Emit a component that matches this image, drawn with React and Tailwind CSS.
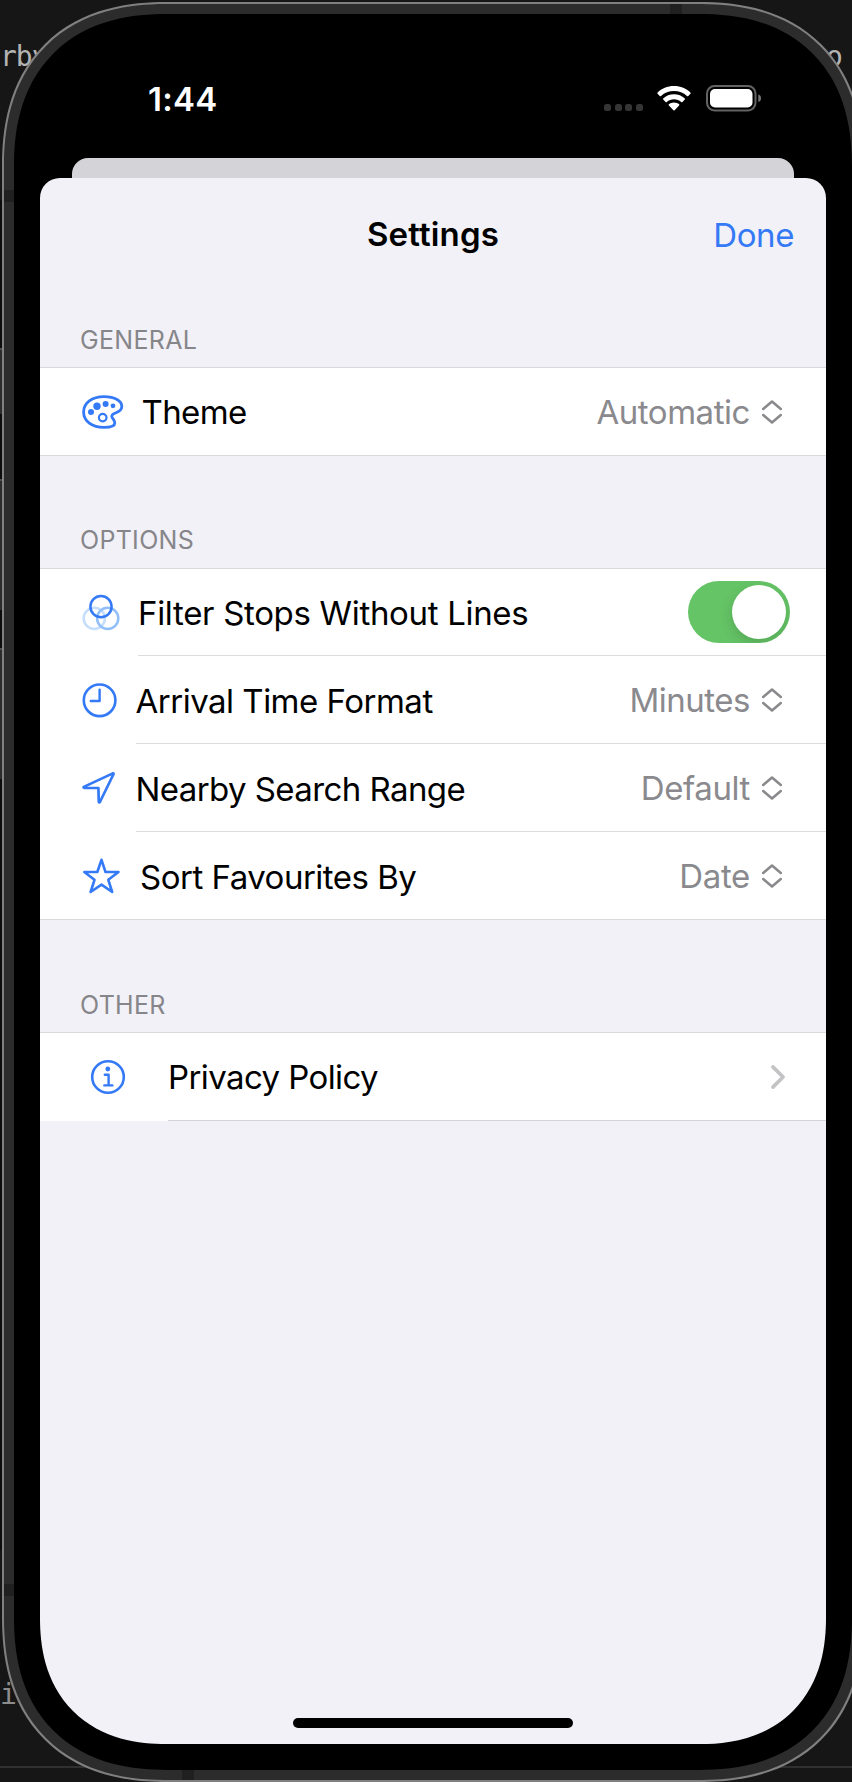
import React from "react";

const Svg = ({ w, h, className = "", children }) => (
  <svg
    width={w}
    height={h}
    viewBox={`0 0 ${w} ${h}`}
    fill="none"
    strokeLinecap="round"
    strokeLinejoin="round"
    className={`block shrink-0 overflow-visible ${className}`}
  >
    {children}
  </svg>
);

const BLUE = "#3479f6";

const PaletteIcon = () => (
  <Svg w={41} h={34}>
    <path
      d="M22 1.7C33 1.7 39.8 6 39.8 11.5C39.8 14.5 37.5 16.5 33.5 18C30.5 19.2 29 20.3 30.1 22.5C31 24 32.8 25.5 32.8 28C32.8 31 28 32.4 22 32.4C10 32.4 1.6 26 1.6 17C1.6 8 10 1.7 22 1.7Z"
      stroke={BLUE}
      strokeWidth="2.8"
    />
    <g fill={BLUE}>
      <circle cx="9" cy="17" r="3" />
      <circle cx="15" cy="11.3" r="3.7" />
      <circle cx="23.6" cy="9" r="3" />
      <circle cx="31" cy="10.8" r="2.4" />
    </g>
    <circle cx="20.7" cy="22.6" r="3.8" stroke={BLUE} strokeWidth="2.2" />
  </Svg>
);

const FiltersIcon = () => (
  <Svg w={37} h={35}>
    <circle cx="12.3" cy="23.3" r="10.6" stroke="#c5defc" strokeWidth="2.5" />
    <circle cx="25.7" cy="23.3" r="10.6" stroke="#90bffa" strokeWidth="2.5" />
    <circle cx="19" cy="11.7" r="10.6" stroke={BLUE} strokeWidth="2.5" />
  </Svg>
);

const ClockIcon = () => (
  <Svg w={35} h={35}>
    <circle cx="17.6" cy="17.3" r="15.8" stroke={BLUE} strokeWidth="2.6" />
    <path d="M17.6 6.6V18H8.8" stroke={BLUE} strokeWidth="2.4" />
  </Svg>
);

const ArrowIcon = () => (
  <Svg w={33} h={33}>
    <path
      d="M30.800 1.400L1.800 14.900Q1.200 15.600 2 15.800L16.400 16L16.800 30Q17.300 31 17.900 30L31.600 2Q31.600 1.200 30.800 1.400Z"
      stroke={BLUE}
      strokeWidth="2.7"
    />
  </Svg>
);

const StarIcon = () => (
  <Svg w={37} h={36}>
    <path
      d="M19.500 1.800L23.500 14H36.500L26.300 21.800L30.200 34L19.500 26.600L8.600 34L12.500 21.800L2.300 14H15.300Z"
      stroke={BLUE}
      strokeWidth="2.6"
    />
  </Svg>
);

const InfoIcon = () => (
  <Svg w={34} h={34}>
    <circle cx="17" cy="17" r="15.8" stroke={BLUE} strokeWidth="2.6" />
    <circle cx="16.800" cy="9" r="2.400" fill={BLUE} />
    <path d="M13.800 14.700H17.600V25.200M13.300 25.400H21.400" stroke={BLUE} strokeWidth="2.400" />
  </Svg>
);

const UpDown = () => (
  <Svg w={20} h={24}>
    <path d="M1.2 9L10 1.5L18.8 9M1.2 15L10 22.5L18.8 15" stroke="#8a8a8e" strokeWidth="2.5" />
  </Svg>
);

const ChevronRight = () => (
  <Svg w={14} h={24}>
    <path d="M1.9 1.9L12.1 12L1.9 22.1" stroke="#c3c3c5" strokeWidth="3.6" />
  </Svg>
);

const Toggle = () => (
  <div className="flex h-[62px] w-[102px] justify-end overflow-hidden rounded-full bg-[#65c466] p-1">
    <div className="size-[54px] rounded-full bg-white shadow-[0_5px_14px_rgba(0,0,0,0.15)]" />
  </div>
);

const SectionTitle = ({ className, children }) => (
  <h2 className={`flex items-end border-b border-[#d9d9dc] pl-[40px] text-[25px] leading-[30px] text-[#86868a] ${className}`}>
    {children}
  </h2>
);

function Row({ icon, iconBox, gap, label, tracking, value, valueTracking, control, divider, height = "h-[88px]" }) {
  return (
    <div className={`flex bg-white pl-[42px] ${height}`}>
      <div className={`flex shrink-0 items-center ${iconBox}`}>{icon}</div>
      <div className={`flex flex-1 items-center justify-between border-b ${divider} ${gap}`}>
        <span className={`whitespace-nowrap text-[33px] leading-[40px] text-black ${tracking}`}>{label}</span>
        {control || (
          <div className="mr-[44px] flex items-center gap-[12px]">
            <span className={`text-[33px] leading-[40px] text-[#8a8a8e] ${valueTracking}`}>{value}</span>
            <UpDown />
          </div>
        )}
      </div>
    </div>
  );
}

function StatusBar() {
  return (
    <div className="flex h-[144px] items-start justify-between pt-[63px] pr-[64px] pl-[108px]">
      <span className="mt-[2px] text-[33px] leading-[40px] font-semibold tracking-[0.3px] text-white">1:44</span>
      <div className="mt-[8px] flex items-start">
        <div className="mt-[19px] mr-[14px] flex gap-[3.7px]">
          <i className="size-[7px] rounded-[2.5px] bg-[#353535]" />
          <i className="size-[7px] rounded-[2.5px] bg-[#353535]" />
          <i className="size-[7px] rounded-[2.5px] bg-[#353535]" />
          <i className="size-[7px] rounded-[2.5px] bg-[#353535]" />
        </div>
        <Svg w={34} h={25} className="mt-[1px] mr-[15px]">
          <g fill="#fff">
            <path d="M17 0C23.6 0 29.4 2.6 33.4 6.5Q34 7.2 33.4 7.8L31.3 10Q30.7 10.5 30 10C26.500 6.800 22 5 17 5S7.500 6.800 4 10Q3.300 10.500 2.700 10L.6 7.800Q0 7.200 .6 6.500C4.600 2.600 10.400 0 17 0Z" />
            <path d="M17 8.300C21.200 8.300 25 9.900 27.800 12.400Q28.400 13 27.800 13.600L25.400 16Q24.800 16.500 24.200 16C22.200 14.300 19.700 13.300 17 13.300S11.800 14.300 9.800 16Q9.200 16.500 8.600 16L6.200 13.600Q5.600 13 6.200 12.400C9 9.900 12.800 8.300 17 8.300Z" />
            <path d="M17 16.500C19 16.500 20.800 17.200 22.100 18.300Q22.700 18.900 22.100 19.500L17.600 24.200Q17 24.800 16.400 24.200L11.900 19.500Q11.300 18.900 11.900 18.300C13.200 17.200 15 16.500 17 16.500Z" />
          </g>
        </Svg>
        <Svg w={56} h={27}>
          <rect x="1" y="1" width="48.500" height="24.500" rx="7.500" stroke="#636363" strokeWidth="2" />
          <rect x="4" y="4" width="42.500" height="18.500" rx="5" fill="#fff" />
          <path d="M52.300 9.500C54 10 55 11.400 55 13.300S54 16.600 52.300 17.100Z" fill="#777" />
        </Svg>
      </div>
    </div>
  );
}

function SettingsSheet() {
  return (
    <div className="flex flex-1 flex-col overflow-hidden rounded-b-[114px] bg-[#f2f1f7] supports-[corner-shape:squircle]:rounded-b-[126px] supports-[corner-shape:squircle]:[corner-shape:round_round_superellipse(1.19)_superellipse(1.19)] rounded-t-[20px]">
      <header className="grid h-[111px] grid-cols-[1fr_auto_1fr] items-center pr-[32px]">
        <span />
        <h1 className="pl-[32px] text-[33px] leading-[40px] font-semibold tracking-[0.15px] text-black">Settings</h1>
        <span className="justify-self-end pt-[2px] text-[33px] leading-[40px] tracking-[-0.4px] text-[#3479f6]">Done</span>
      </header>

      <SectionTitle className="h-[79px] pb-[12px] tracking-[0.3px]">GENERAL</SectionTitle>
      <Row icon={<PaletteIcon />} iconBox="h-[87px] w-[60px]" gap="-ml-[102px] pl-[101.5px]" label="Theme" tracking="tracking-[-0.6px]" value="Automatic" valueTracking="tracking-[-0.45px]" divider="border-[#d9d9dc]" />

      <SectionTitle className="h-[113px] pb-[13px] tracking-[0.3px]">OPTIONS</SectionTitle>
      <Row icon={<FiltersIcon />} iconBox="h-[87px] w-[56px]" gap="pr-[36px]" label="Filter Stops Without Lines" tracking="pt-[1px] tracking-[-0.32px]" control={<Toggle />} divider="border-[#dcdcde]" height="h-[87px]" />
      <Row icon={<ClockIcon />} iconBox="h-[89px] w-[53.5px]" gap="" label="Arrival Time Format" tracking="pt-[2px] tracking-[-0.5px]" value="Minutes" valueTracking="tracking-[-0.5px]" divider="border-[#dcdcde]" />
      <Row icon={<ArrowIcon />} iconBox="h-[89px] w-[53.5px]" gap="" label="Nearby Search Range" tracking="pt-[2px] tracking-[-0.58px]" value="Default" valueTracking="tracking-[-0.4px]" divider="border-[#dcdcde]" />
      <Row icon={<StarIcon />} iconBox="h-[88px] w-[58px]" gap="-ml-[100px] pl-[100px]" label="Sort Favourites By" tracking="pt-[2px] tracking-[-0.5px]" value="Date" valueTracking="tracking-[-0.3px]" divider="border-[#d9d9dc]" />

      <SectionTitle className="h-[113px] pb-[12px] tracking-[0.3px]">OTHER</SectionTitle>
      <Row icon={<InfoIcon />} iconBox="h-[88px] w-[86px] pl-[9px]" gap="pr-[41px]" label="Privacy Policy" tracking="pt-[1px] tracking-[-0.6px]" control={<ChevronRight />} divider="border-[#d4d4d7]" />

      <div className="flex flex-1 items-end justify-center pb-[16px]">
        <div className="h-[10px] w-[280px] rounded-full bg-black" />
      </div>
    </div>
  );
}

export default function App() {
  return (
    <div className="relative h-[1782px] w-[852px] overflow-hidden bg-[#161616] pt-[2px] pl-[2px] font-[Inter,sans-serif]">
      <div className="absolute top-[40px] left-0 font-['DejaVu_Sans_Mono',monospace] text-[28px] leading-[34px] tracking-[-1px] text-[#b4b4b4]">rby</div>
      <div className="absolute top-[40px] left-[826px] font-['DejaVu_Sans_Mono',monospace] text-[28px] leading-[34px] text-[#b4b4b4]">o</div>
      <div className="absolute top-[1678px] left-0 font-['DejaVu_Sans_Mono',monospace] text-[28px] leading-[34px] text-[#8c8c8c]">i</div>
      <div className="absolute top-[1766px] left-0 h-[2px] w-[852px] bg-[#303030]" />
      <div className="absolute top-[200px] left-0 h-[1350px] w-[2px] bg-[#0c0c0c]" />
      <div className="absolute top-[348px] left-0 h-[66px] w-[2px] border-t-2 border-[#505050] bg-[#2c2c2c]" />
      <div className="absolute top-[479px] left-0 h-[131px] w-[2px] border-t-2 border-[#505050] bg-[#2c2c2c]" />
      <div className="absolute top-[648px] left-0 h-[131px] w-[2px] border-t-2 border-[#505050] bg-[#2c2c2c]" />

      <div className="relative h-[1780px] w-[862px] overflow-hidden rounded-[150px] border-2 border-[#808080] bg-[#2c2c2c] p-[10px] supports-[corner-shape:squircle]:rounded-[165px] supports-[corner-shape:squircle]:[corner-shape:superellipse(1.22)]">
        <div className="absolute top-0 left-[666px] h-[10px] w-[12px] bg-[#202020]" />
        <div className="absolute bottom-0 left-[178px] h-[10px] w-[12px] bg-[#202020]" />
        <div className="absolute top-[186px] left-0 h-[12px] w-[10px] bg-[#202020]" />
        <div className="absolute top-[1580px] left-0 h-[12px] w-[10px] bg-[#202020]" />
        <div className="relative flex h-full flex-col rounded-[138px] bg-black px-[26px] pb-[26px] supports-[corner-shape:squircle]:rounded-[153px] supports-[corner-shape:squircle]:[corner-shape:superellipse(1.22)]">
          <StatusBar />
          <div className="mx-[32px] h-[20px] shrink-0 rounded-t-[16px] bg-[#d4d3d8]" />
          <SettingsSheet />
        </div>
      </div>
    </div>
  );
}
